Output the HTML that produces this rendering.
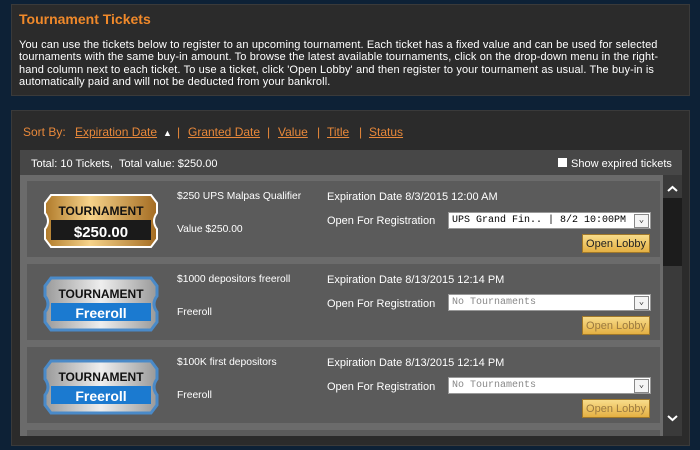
<!DOCTYPE html>
<html><head><style>
body{margin:0;width:700px;height:450px;background:#0d2136;font-family:"Liberation Sans",sans-serif;color:#fff;position:relative;overflow:hidden;font-size:11px}
.p{position:absolute;background:#2b2b2b;border:1px solid #3a3a3a}
.a{position:absolute}
.item{position:absolute;left:27px;width:633px;height:76px;background:#5b5b5b}
.sel{position:absolute;left:421px;height:17px;background:#fff;border:1px solid #999;color:#000;font-family:"Liberation Mono",monospace;font-size:10px;line-height:15px;padding-left:3px;box-sizing:border-box;width:203px}
.sel.d{color:#888}
.sel i{position:absolute;right:1px;top:1px;width:13px;height:12px;border:1px solid #888;background:#f4f4f4;font-style:normal;font-size:9px;line-height:11px;text-align:center;color:#333}
.btn{position:absolute;left:555px;width:68px;height:19px;background:linear-gradient(#f8dc8a,#e4b043);border:1px solid #a0782a;color:#222;font-size:11px;line-height:19px;text-align:center;box-sizing:border-box}
.btn.d{color:#9b7a40}
.tk{position:absolute;left:16px;top:12px}
.t{font-size:10.3px}
.s{position:absolute;top:125px;color:#e8883a;font-size:12px}
</style></head><body>
<div class="p" style="left:11px;top:4px;width:677px;height:90px"></div>
<div class="a" style="left:19px;top:11px;color:#f0892a;font-weight:bold;font-size:14px">Tournament Tickets</div>
<div class="a" style="left:19px;top:39px;width:660px;font-size:11px;letter-spacing:0.12px;line-height:12.3px;color:#fff">You can use the tickets below to register to an upcoming tournament. Each ticket has a fixed value and can be used for selected tournaments with the same buy-in amount. To browse the latest available tournaments, click on the drop-down menu in the right-hand column next to each ticket. To use a ticket, click 'Open Lobby' and then register to your tournament as usual. The buy-in is automatically paid and will not be deducted from your bankroll.</div>
<div class="p" style="left:11px;top:110px;width:677px;height:334px"></div>
<div class="s" style="left:23px">Sort By:</div>
<div class="s" style="left:75px"><u>Expiration Date</u></div>
<div class="s" style="left:163px;color:#fff;font-size:9px;top:128px">&#9650;</div>
<div class="s" style="left:177px">|</div>
<div class="s" style="left:188px"><u>Granted Date</u></div>
<div class="s" style="left:267px">|</div>
<div class="s" style="left:278px"><u>Value</u></div>
<div class="s" style="left:317px">|</div>
<div class="s" style="left:327px"><u>Title</u></div>
<div class="s" style="left:359px">|</div>
<div class="s" style="left:369px"><u>Status</u></div>
<div class="a" style="left:20px;top:150px;width:662px;height:25px;background:#474747"></div>
<div class="a" style="left:31px;top:158px;font-size:11px">Total: 10 Tickets, &nbsp;Total value: $250.00</div>
<div class="a" style="left:558px;top:158px;width:9px;height:9px;background:#fff"></div>
<div class="a" style="left:571px;top:158px;font-size:11px">Show expired tickets</div>
<div class="a" style="left:20px;top:175px;width:662px;height:261px;background:#6b6b6b"></div>
<div class="a" style="left:663px;top:175px;width:19px;height:261px;background:#3a3a3a"></div>
<div class="a" style="left:663px;top:198px;width:19px;height:68px;background:#1c1c1c"></div>
<svg class="a" style="left:667px;top:185px" width="11" height="8"><path d="M1 6L5.5 2L10 6" stroke="#fff" stroke-width="2" fill="none"/></svg>
<svg class="a" style="left:667px;top:414px" width="11" height="8"><path d="M1 2L5.5 6L10 2" stroke="#fff" stroke-width="2" fill="none"/></svg>

<svg width="0" height="0" style="position:absolute"><defs>
<linearGradient id="g" x1="0" y1="0" x2="1" y2="0"><stop offset="0" stop-color="#b07a2a"/><stop offset=".4" stop-color="#f6d38a"/><stop offset="1" stop-color="#a46c22"/></linearGradient>
<linearGradient id="s" x1="0" y1="0" x2="1" y2="0"><stop offset="0" stop-color="#9a9a9a"/><stop offset=".5" stop-color="#eee"/><stop offset="1" stop-color="#999"/></linearGradient>
</defs></svg>

<div class="item" style="top:181px">
<svg class="tk" width="116" height="56"><path d="M8 2H108L114 10V20Q108 28 114 36V46L108 54H8L2 46V36Q8 28 2 20V10Z" fill="url(#g)" stroke="#fff" stroke-width="2"/><rect x="8" y="27" width="100" height="20" fill="#1a1a1a"/><text x="58" y="22" text-anchor="middle" font-family="Liberation Sans" font-weight="bold" font-size="12" fill="#111">TOURNAMENT</text><text x="58" y="44" text-anchor="middle" font-family="Liberation Sans" font-weight="bold" font-size="15" fill="#fff">$250.00</text></svg>
<div class="a t" style="left:150px;top:10px">$250 UPS Malpas Qualifier</div>
<div class="a t" style="left:150px;top:43px">Value $250.00</div>
<div class="a" style="left:300px;top:10px">Expiration Date 8/3/2015 12:00 AM</div>
<div class="a" style="left:300px;top:34px">Open For Registration</div>
<div class="sel" style="top:31px">UPS Grand Fin.. | 8/2 10:00PM<i>&#8964;</i></div>
<div class="btn" style="top:53px">Open Lobby</div>
</div>

<div class="item" style="top:264px">
<svg class="tk" width="116" height="56"><path d="M8 2H108L114 10V20Q108 28 114 36V46L108 54H8L2 46V36Q8 28 2 20V10Z" fill="url(#s)" stroke="#4a8ac8" stroke-width="3"/><rect x="8" y="27" width="100" height="18" fill="#1b7ad0"/><text x="58" y="22" text-anchor="middle" font-family="Liberation Sans" font-weight="bold" font-size="12" fill="#111">TOURNAMENT</text><text x="58" y="42" text-anchor="middle" font-family="Liberation Sans" font-weight="bold" font-size="14" fill="#fff">Freeroll</text></svg>
<div class="a t" style="left:150px;top:10px">$1000 depositors freeroll</div>
<div class="a t" style="left:150px;top:43px">Freeroll</div>
<div class="a" style="left:300px;top:10px">Expiration Date 8/13/2015 12:14 PM</div>
<div class="a" style="left:300px;top:34px">Open For Registration</div>
<div class="sel d" style="top:30px">No Tournaments<i>&#8964;</i></div>
<div class="btn d" style="top:52px">Open Lobby</div>
</div>

<div class="item" style="top:347px">
<svg class="tk" width="116" height="56"><path d="M8 2H108L114 10V20Q108 28 114 36V46L108 54H8L2 46V36Q8 28 2 20V10Z" fill="url(#s)" stroke="#4a8ac8" stroke-width="3"/><rect x="8" y="27" width="100" height="18" fill="#1b7ad0"/><text x="58" y="22" text-anchor="middle" font-family="Liberation Sans" font-weight="bold" font-size="12" fill="#111">TOURNAMENT</text><text x="58" y="42" text-anchor="middle" font-family="Liberation Sans" font-weight="bold" font-size="14" fill="#fff">Freeroll</text></svg>
<div class="a t" style="left:150px;top:10px">$100K first depositors</div>
<div class="a t" style="left:150px;top:43px">Freeroll</div>
<div class="a" style="left:300px;top:10px">Expiration Date 8/13/2015 12:14 PM</div>
<div class="a" style="left:300px;top:34px">Open For Registration</div>
<div class="sel d" style="top:30px">No Tournaments<i>&#8964;</i></div>
<div class="btn d" style="top:52px">Open Lobby</div>
</div>
<div class="item" style="top:430px;height:6px"></div>
</body></html>
